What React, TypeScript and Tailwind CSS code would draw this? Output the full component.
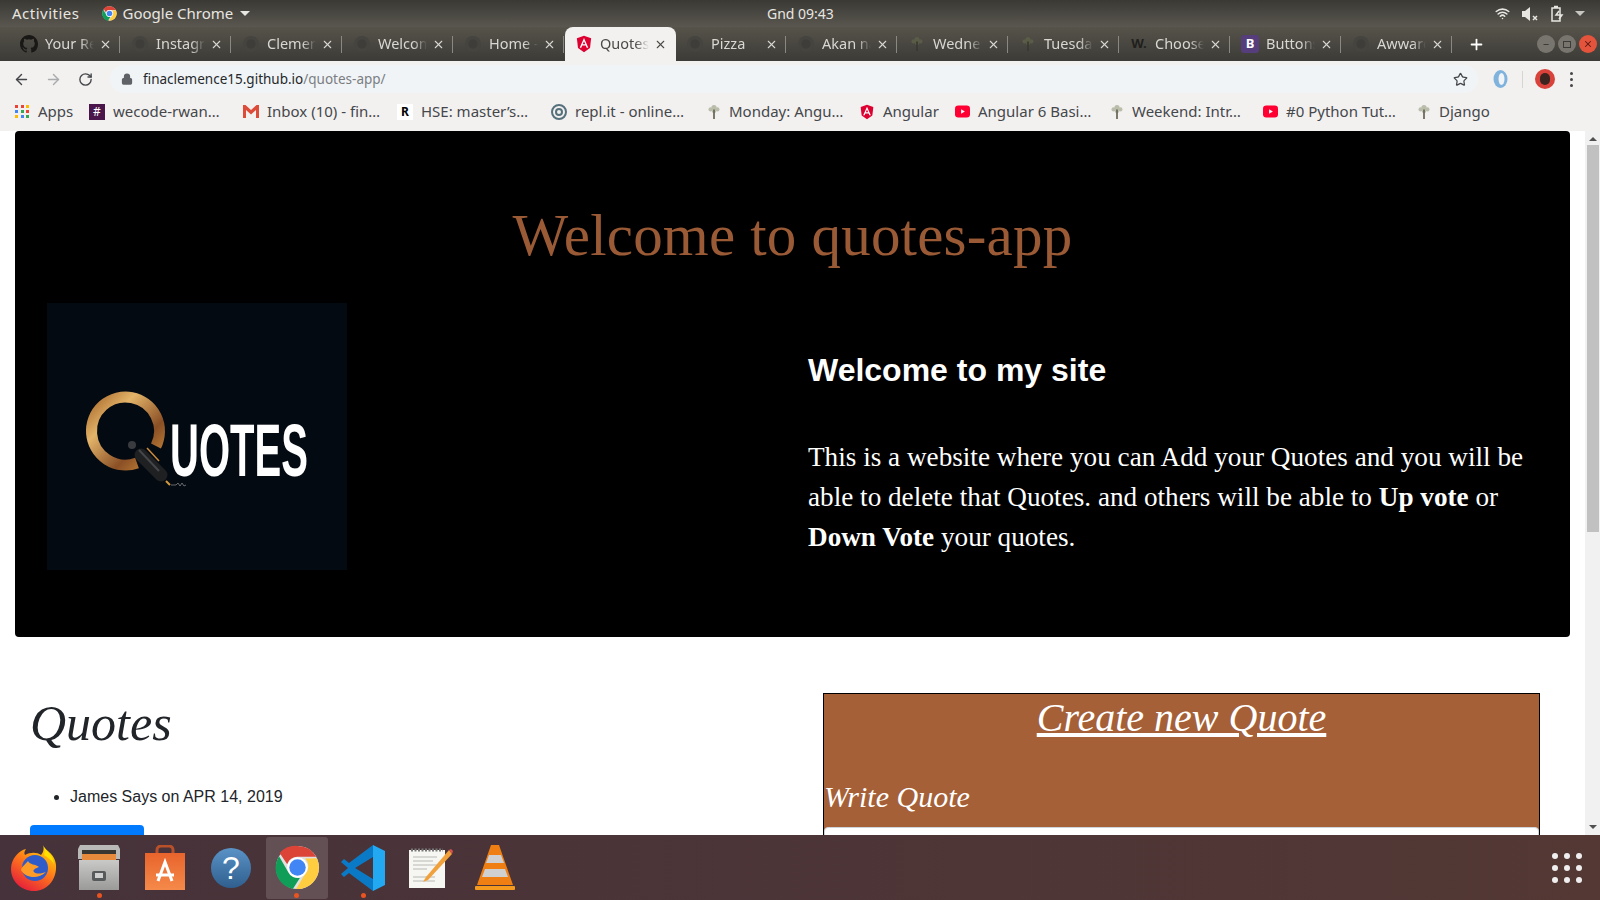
import { ArrowLeft, ArrowRight, Lock, Plus, RotateCw, Star, Wifi, X } from 'lucide-react'

function ChromeIcon({ size = 16 }: { size?: number }) {
  return (
    <svg width={size} height={size} viewBox="0 0 48 48">
      <circle cx="24" cy="24" r="23" fill="#e0e0e0" />
      <path d="M24 1a23 23 0 0 1 19.9 11.5H24a11.5 11.5 0 0 0-11 8L5 8.5A23 23 0 0 1 24 1z" fill="#db4437" />
      <path d="M4.3 12 14 28.8a11.5 11.5 0 0 0 12.5 6.3L19 47A23 23 0 0 1 4.3 12z" fill="#0f9d58" />
      <path d="M44.5 14a23 23 0 0 1-22 33L32 31a11.5 11.5 0 0 0 0-16.5z" fill="#ffcd40" />
      <circle cx="24" cy="24" r="11" fill="#fff" />
      <circle cx="24" cy="24" r="8.8" fill="#4285f4" />
    </svg>
  )
}

function AngularIcon({ size = 18 }: { size?: number }) {
  return (
    <svg width={size} height={size} viewBox="0 0 24 24">
      <path d="M12 1 2.5 4.4 4 17.2 12 23l8-5.8 1.5-12.8z" fill="#dd0031" />
      <path d="M12 4 6.3 17h2.1l1.2-2.9h4.8l1.2 2.9h2.1zm-1.700 8.300L12 8.300l1.700 4z" fill="#fff" />
    </svg>
  )
}

function DimGlobe() {
  return (
    <svg width="18" height="18" viewBox="0 0 18 18">
      <circle cx="9" cy="9" r="8" fill="#45443f" />
      <circle cx="9" cy="9" r="4.5" fill="#3e3d39" />
    </svg>
  )
}

function GithubIcon() {
  return (
    <svg width="18" height="18" viewBox="0 0 16 16" fill="#191816">
      <path d="M8 0C3.58 0 0 3.58 0 8c0 3.54 2.29 6.53 5.47 7.59.4.07.55-.17.55-.38v-1.34c-2.23.48-2.7-1.07-2.7-1.07-.36-.92-.89-1.17-.89-1.17-.73-.5.05-.49.05-.49.8.06 1.23.82 1.23.82.71 1.22 1.87.87 2.33.66.07-.52.28-.87.51-1.07-1.78-.2-3.64-.89-3.64-3.95 0-.87.31-1.59.82-2.15-.08-.2-.36-1.02.08-2.12 0 0 .67-.21 2.2.82a7.6 7.6 0 0 1 4 0c1.53-1.04 2.2-.82 2.2-.82.44 1.1.16 1.92.08 2.12.51.56.82 1.27.82 2.15 0 3.07-1.87 3.75-3.65 3.95.29.25.54.74.54 1.49v2.21c0 .21.15.46.55.38A8 8 0 0 0 16 8c0-4.42-3.58-8-8-8z" />
    </svg>
  )
}

function TreeIcon({ dim = false }: { dim?: boolean }) {
  const leaf = dim ? '#5a5c48' : '#b9bdaa'
  const trunk = dim ? '#3b3a30' : '#6b6658'
  return (
    <svg width="14" height="18" viewBox="0 0 16 18">
      <circle cx="8" cy="4" r="3" fill={leaf} />
      <circle cx="4" cy="6" r="2.3" fill={leaf} />
      <circle cx="12" cy="6" r="2.3" fill={leaf} />
      <circle cx="8" cy="8" r="2.3" fill={leaf} />
      <path d="M7 6h2v11H7z" fill={trunk} />
    </svg>
  )
}

function YoutubeIcon() {
  return (
    <svg width="15" height="15" viewBox="0 0 16 16">
      <rect x="0" y="1.5" width="16" height="13" rx="3.5" fill="#ff0033" />
      <path d="M6.5 5.5v5L10.5 8z" fill="#fff" />
    </svg>
  )
}

const tabs = [
  { title: 'Your Repositories', icon: <GithubIcon /> },
  { title: 'Instagram', icon: <DimGlobe /> },
  { title: 'Clement', icon: <DimGlobe /> },
  { title: 'Welcome', icon: <DimGlobe /> },
  { title: 'Home - Page', icon: <DimGlobe /> },
  { title: 'QuotesApp', icon: <AngularIcon />, active: true },
  { title: 'Pizza', icon: <DimGlobe /> },
  { title: 'Akan names', icon: <DimGlobe /> },
  { title: 'Wednesday', icon: <TreeIcon dim /> },
  { title: 'Tuesday', icon: <TreeIcon dim /> },
  { title: 'Choose', icon: <span className="text-[13px] font-bold text-[#201f1c]">W.</span> },
  {
    title: 'Buttons',
    icon: (
      <span className="flex h-[18px] w-[18px] items-center justify-center rounded-[3px] bg-[#563d7c] text-[13px] font-bold text-white">
        B
      </span>
    ),
  },
  { title: 'Awwards', icon: <DimGlobe /> },
]

const bookmarks = [
  {
    label: 'Apps',
    cls: 'w-[74px]',
    icon: (
      <span className="grid w-[15px] grid-cols-3 gap-[2px]">
        {['bg-[#ea4335]', 'bg-[#ea4335]', 'bg-[#fbbc05]', 'bg-[#4285f4]', 'bg-[#34a853]', 'bg-[#ea4335]', 'bg-[#fbbc05]', 'bg-[#4285f4]', 'bg-[#34a853]'].map((c, i) => (
          <span key={i} className={`h-[3px] w-[3px] ${c}`} />
        ))}
      </span>
    ),
  },
  {
    label: 'wecode-rwan…',
    cls: 'w-[154px]',
    icon: (
      <span className="grid h-4 w-4 place-items-center bg-[#4a154b] text-[12px] leading-none text-white">#</span>
    ),
  },
  {
    label: 'Inbox (10) - fin…',
    cls: 'w-[154px]',
    icon: (
      <svg width="16" height="13" viewBox="0 0 16 13">
        <path d="M0 0h2.5L8 5l5.5-5H16v13h-3V5L8 9.5 3 5v8H0z" fill="#dd4b39" />
      </svg>
    ),
  },
  {
    label: 'HSE: master’s…',
    cls: 'w-[154px]',
    icon: (
      <span className="flex h-4 w-4 items-center justify-center bg-white text-[12px] font-bold leading-none text-black">R</span>
    ),
  },
  {
    label: 'repl.it - online…',
    cls: 'w-[156px]',
    icon: (
      <svg width="16" height="16" viewBox="0 0 16 16" fill="none" stroke="#56707c" strokeWidth="2">
        <circle cx="8" cy="8" r="7" />
        <circle cx="8" cy="8" r="3" />
      </svg>
    ),
  },
  { label: 'Monday: Angu…', cls: 'w-[152px]', icon: <TreeIcon /> },
  { label: 'Angular', cls: 'w-[96px]', icon: <AngularIcon size={16} /> },
  { label: 'Angular 6 Basi…', cls: 'w-[155px]', icon: <YoutubeIcon /> },
  { label: 'Weekend: Intr…', cls: 'w-[153px]', icon: <TreeIcon /> },
  { label: '#0 Python Tut…', cls: 'w-[154px]', icon: <YoutubeIcon /> },
  { label: 'Django', cls: 'w-[80px]', icon: <TreeIcon /> },
]

function QuotesLogo() {
  return (
    <svg width="300" height="267" viewBox="0 0 300 267">
      <defs>
        <linearGradient id="ring" x1="0" y1="0" x2="1" y2="1">
          <stop offset="0" stopColor="#a8692c" />
          <stop offset="0.3" stopColor="#e3b469" />
          <stop offset="0.7" stopColor="#8a4f25" />
          <stop offset="1" stopColor="#c98a3c" />
        </linearGradient>
      </defs>
      <path d="M90 160A34 34 0 1 1 109 143" fill="none" stroke="url(#ring)" strokeWidth="11" />
      <circle cx="85" cy="142" r="4" fill="#3a3b3e" />
      <path d="M94 152 L114 172" stroke="#1f2022" strokeWidth="13" strokeLinecap="round" />
      <path d="M92 147 L112 168" stroke="#44464a" strokeWidth="2" />
      <path d="M100 145 L112 158" stroke="#c98a3c" strokeWidth="1.5" />
      <path d="M119 178 L123 182" stroke="#d39a3e" strokeWidth="2" />
      <path d="M124 182h5l2-2 2 3 2-3 2 3 2-1" stroke="#7f8286" strokeWidth="0.8" fill="none" />
      <text
        x="123"
        y="173"
        textLength="138"
        lengthAdjust="spacingAndGlyphs"
        fill="#fff"
        fontSize="74"
        fontWeight="700"
        fontFamily="Liberation Sans, sans-serif"
      >
        UOTES
      </text>
    </svg>
  )
}

function Dock() {
  return (
    <div className="flex h-[65px] shrink-0 items-center justify-between bg-gradient-to-r from-[#46323a] to-[#533834] pl-[2px] pr-[18px]">
      <div className="flex items-center">
        {/* firefox */}
        <div className="relative flex h-[62px] w-[62px] items-center justify-center pl-[2px]">
          <svg width="46" height="48" viewBox="0 0 46 48">
            <defs>
              <linearGradient id="fx" x1="0.8" y1="0" x2="0.2" y2="1">
                <stop offset="0" stopColor="#ffe000" />
                <stop offset="0.45" stopColor="#ff7a1a" />
                <stop offset="1" stopColor="#e3173e" />
              </linearGradient>
            </defs>
            <path d="M32 1c2 6 12 8 13 20 1 16-10 26-22 26C10 47 0 37 0 25 0 15 8 6 15 5c-2 3-2 4-1 6 5-3 12-3 16 0 3-3 3-7 2-10z" fill="url(#fx)" />
            <circle cx="24" cy="24" r="13" fill="#2f5cc8" />
            <path d="M10 26c4 8 17 10 25 2-3 1-9 3-12 0-2-2 2-4 5-5-4-3-9-2-11-6-2 3-6 5-7 9z" fill="#ff9c28" />
            <path d="M33 3c3 5 9 8 10 17-3-5-7-7-10-9 1-3 1-5 0-8z" fill="#ffe000" />
          </svg>
        </div>
        {/* files */}
        <div className="relative ml-[4px] flex h-[62px] w-[62px] items-center justify-center">
          <svg width="44" height="46" viewBox="0 0 44 46">
            <defs>
              <linearGradient id="steel" x1="0" y1="0" x2="0" y2="1">
                <stop offset="0" stopColor="#c9cac8" />
                <stop offset="1" stopColor="#9a9b99" />
              </linearGradient>
            </defs>
            <path d="M3 0h38l2 4v10H1V4z" fill="#b9bab8" />
            <rect x="5" y="5" width="34" height="10" fill="#3a3632" />
            <rect x="5" y="9" width="34" height="7" fill="#e78a3c" />
            <rect x="2" y="15" width="40" height="30" fill="url(#steel)" />
            <rect x="15" y="26" width="14" height="10" rx="2" fill="#575a5a" />
            <rect x="18" y="28" width="8" height="5" fill="#cfcfcf" />
          </svg>
          <span className="absolute bottom-[1px] left-[29px] h-[5px] w-[5px] rounded-full bg-[#e95420]" />
        </div>
        {/* software */}
        <div className="ml-[4px] flex h-[62px] w-[62px] items-center justify-center">
          <svg width="44" height="46" viewBox="0 0 44 46">
            <defs>
              <linearGradient id="bag" x1="0" y1="0" x2="0" y2="1">
                <stop offset="0" stopColor="#e8642c" />
                <stop offset="1" stopColor="#f58a4a" />
              </linearGradient>
            </defs>
            <path d="M14 10V5a4 4 0 0 1 4-4h8a4 4 0 0 1 4 4v5" fill="none" stroke="#b8502a" strokeWidth="3" />
            <path d="M2 8h40v37H2z" fill="url(#bag)" />
            <path d="M15 36 22 17l7 19" stroke="#fff" strokeWidth="3" fill="none" />
            <path d="M13 30h18" stroke="#fff" strokeWidth="3" />
          </svg>
        </div>
        {/* help */}
        <div className="ml-[4px] flex h-[62px] w-[62px] items-center justify-center">
          <span className="flex h-10 w-10 items-center justify-center rounded-full bg-gradient-to-b from-[#5b93c7] to-[#2f5f8e] font-['Liberation_Sans',sans-serif] text-[32px] leading-none text-white">
            ?
          </span>
        </div>
        {/* chrome, active */}
        <div className="relative ml-[4px] flex h-[62px] w-[62px] items-center justify-center rounded-[3px] bg-[#635055]">
          <ChromeIcon size={45} />
          <span className="absolute bottom-[1px] left-[28px] h-[5px] w-[5px] rounded-full bg-[#e95420]" />
        </div>
        {/* vscode */}
        <div className="relative ml-[4px] flex h-[62px] w-[62px] items-center justify-center">
          <svg width="44" height="46" viewBox="0 0 44 46">
            <path d="M32 0 44 6v34l-12 6V0z" fill="#23a9f2" />
            <path d="M32 0v12L14 23l18 11v12L8 28l-5 4-3-3 7-6-7-6 3-3 5 4z" fill="#0b7ac6" />
          </svg>
          <span className="absolute bottom-[1px] left-[29px] h-[5px] w-[5px] rounded-full bg-[#e95420]" />
        </div>
        {/* gedit */}
        <div className="ml-[4px] flex h-[62px] w-[62px] items-center justify-center pl-[4px]">
          <svg width="46" height="42" viewBox="0 0 46 42">
            <rect x="1" y="3" width="36" height="38" fill="#f6f6f2" />
            <path d="M3 3h32" stroke="#777" strokeWidth="3" strokeDasharray="2 1.5" />
            <path d="M5 10h24M5 14h20M5 18h24M5 22h14M5 30h22M5 34h22" stroke="#b8b8b4" strokeWidth="1" />
            <path d="M41 3 18 30l-3 5 5-2L44 7z" fill="#f0a13c" />
            <path d="M41 3l3 4 1-3-2-2z" fill="#d9534f" />
          </svg>
        </div>
        {/* vlc */}
        <div className="ml-[4px] flex h-[62px] w-[62px] items-center justify-center">
          <svg width="40" height="46" viewBox="0 0 40 46">
            <path d="M16 0h8l14 40H2z" fill="#f07f13" />
            <path d="M14 10h12l3 8H11zM10 24h20l3 8H7z" fill="#d0d0d0" />
            <rect x="0" y="41" width="40" height="4" rx="1" fill="#f49a1f" />
          </svg>
        </div>
      </div>
      <div className="grid grid-cols-3 gap-[6px]">
        {Array.from({ length: 9 }).map((_, i) => (
          <span key={i} className="h-[6px] w-[6px] rounded-full bg-[#f0eeee]" />
        ))}
      </div>
    </div>
  )
}

export default function App() {
  return (
    <div className="flex h-[900px] w-[1600px] flex-col overflow-hidden bg-white font-['Noto_Sans',sans-serif]">
      {/* ubuntu top bar */}
      <div className="relative flex h-[27px] shrink-0 items-center bg-gradient-to-b from-[#3a3934] to-[#5a5750] pl-[12px] pr-[15px] text-[15px] text-[#e8e6e1]">
        <span className="tracking-[0.5px]">Activities</span>
        <span className="ml-[22px] flex items-center gap-[6px]">
          <ChromeIcon size={15} />
          Google Chrome
          <span className="ml-[1px] h-0 w-0 border-x-[5px] border-t-[5px] border-x-transparent border-t-[#e8e6e1]" />
        </span>
        <span className="absolute left-[767px] text-[14px]">Gnd 09:43</span>
        <span className="ml-auto flex items-center gap-[11px]">
          <Wifi size={15} strokeWidth={2.5} />
          <svg width="18" height="16" viewBox="0 0 18 16" fill="#e8e6e1">
            <path d="M1 5h3l5-4v14l-5-4H1z" />
            <path d="m12 10 4 4m0-4-4 4" stroke="#e8e6e1" strokeWidth="1.5" />
          </svg>
          <svg width="14" height="18" viewBox="0 0 14 18" fill="none" stroke="#e8e6e1" strokeWidth="1.5">
            <path d="M4 1.5h4M2 3h8v13H2z" />
            <path d="m9 6-3 4h6l-3 4" />
          </svg>
          <span className="h-0 w-0 border-x-[5px] border-t-[5px] border-x-transparent border-t-[#c8c6c1]" />
        </span>
      </div>

      {/* tab strip */}
      <div className="relative flex h-[34px] shrink-0 items-end bg-gradient-to-b from-[#56534a] to-[#3c3b37] pl-[10px] text-[14.5px] text-[#d9d7d2]">
        {tabs.map(t => (
          <div
            key={t.title}
            className={
              t.active
                ? 'flex h-[34px] w-[111px] items-center rounded-t-[8px] bg-[#f2f1f0] pl-[10px] text-[#4b4a46]'
                : 'flex h-[34px] w-[111px] items-center pl-[10px]'
            }
          >
            <span className="flex w-[18px] shrink-0 items-center justify-center">{t.icon}</span>
            <span className="ml-[7px] w-[49px] shrink-0 overflow-hidden whitespace-nowrap [mask-image:linear-gradient(to_right,black_72%,transparent)]">
              {t.title}
            </span>
            <X size={13} strokeWidth={2} className="ml-[5px] shrink-0" />
            {!t.active && <span className="ml-[7px] h-[17px] w-px shrink-0 bg-[#8a8880]" />}
          </div>
        ))}
        <Plus size={17} strokeWidth={2.5} className="mb-[8px] ml-[15px] text-white" />
        <div className="ml-auto mb-[8px] flex items-center gap-[3px] pr-[3px]">
          <span className="grid h-[18px] w-[18px] place-items-center rounded-full bg-[#77756e] text-[12px] leading-none text-[#3c3b37]">–</span>
          <span className="grid h-[18px] w-[18px] place-items-center rounded-full bg-[#77756e]">
            <span className="h-[7px] w-[8px] border border-[#3c3b37]" />
          </span>
          <span className="grid h-[18px] w-[18px] place-items-center rounded-full bg-[#e4533c] text-[#5a1b10]">
            <X size={10} strokeWidth={2.5} />
          </span>
        </div>
      </div>

      {/* chrome toolbar */}
      <div className="flex h-[36px] shrink-0 items-center bg-[#f2f1f0] text-[#5f6368]">
        <ArrowLeft size={17} strokeWidth={2} className="ml-[13px] text-[#44464a]" />
        <ArrowRight size={17} strokeWidth={2} className="ml-[15px] text-[#a9abad]" />
        <RotateCw size={15} strokeWidth={2.2} className="ml-[16px] text-[#44464a]" />
        <div className="ml-[17px] flex h-[28px] w-[1368px] items-center rounded-full bg-[#f1f4f6] pl-[11px] pr-[10px] text-[13.5px]">
          <Lock size={12} strokeWidth={2.5} className="fill-[#5f6368]" />
          <span className="ml-[10px] text-[#25282c]">finaclemence15.github.io</span>
          <span className="text-[#7a7e83]">/quotes-app/</span>
          <Star size={15} strokeWidth={2} className="ml-auto text-[#44464a]" />
        </div>
        <svg width="17" height="20" viewBox="0 0 17 20" className="ml-[14px]">
          <ellipse cx="8.5" cy="10" rx="7" ry="9" fill="#7fb2dd" />
          <ellipse cx="9.5" cy="10" rx="3" ry="6" fill="#f1f4f6" />
        </svg>
        <span className="ml-[13px] h-[17px] w-px bg-[#d5d5d3]" />
        <span className="ml-[12px] flex h-[20px] w-[20px] items-center justify-center rounded-full bg-[#d9423a]">
          <span className="h-[12px] w-[10px] rounded-full bg-[#3a2420]" />
        </span>
        <span className="ml-[15px] flex flex-col gap-[3px]">
          <span className="h-[3px] w-[3px] rounded-full bg-[#44464a]" />
          <span className="h-[3px] w-[3px] rounded-full bg-[#44464a]" />
          <span className="h-[3px] w-[3px] rounded-full bg-[#44464a]" />
        </span>
      </div>

      {/* bookmarks */}
      <div className="flex h-[34px] shrink-0 items-center bg-[#f2f1f0] pb-[5px] pl-[15px] text-[15px] text-[#45474b]">
        {bookmarks.map(b => (
          <div key={b.label} className={`flex shrink-0 items-center gap-[8px] whitespace-nowrap ${b.cls}`}>
            {b.icon}
            <span>{b.label}</span>
          </div>
        ))}
      </div>

      {/* page + scrollbar */}
      <div className="flex min-h-0 flex-1">
        <main className="w-[1585px] shrink-0 overflow-hidden">
          <section className="mx-[15px] flex h-[506px] flex-col rounded-[4px] bg-black">
            <h1 className="flex h-[172px] shrink-0 items-center justify-center pt-[36px] font-['Liberation_Serif',serif] text-[59px] font-light tracking-[0.2px] text-[#9a5a35]">
              Welcome to quotes-app
            </h1>
            <div className="flex">
              <div className="w-[793px] shrink-0 pl-[32px]">
                <div className="h-[267px] w-[300px] bg-[#040a12]">
                  <QuotesLogo />
                </div>
              </div>
              <div className="w-[740px] pt-[48px] text-white">
                <h2 className="font-['Liberation_Sans',sans-serif] text-[32px] font-bold leading-[38px]">Welcome to my site</h2>
                <p className="mt-[48px] font-['Liberation_Serif',serif] text-[27.2px] leading-[40px]">
                  This is a website where you can Add your Quotes and you will be able to delete that Quotes. and others will be able to <b>Up vote</b> or <b>Down Vote</b> your quotes.
                </p>
              </div>
            </div>
          </section>

          <section className="flex">
            <div className="w-[823px] shrink-0 pl-[30px] text-[#212529]">
              <h2 className="mt-[56px] font-['Liberation_Serif',serif] text-[50px] italic leading-[60px]">Quotes</h2>
              <ul className="mt-[32px] list-disc pl-[40px] font-['Liberation_Sans',sans-serif] text-[16px] leading-[24px]">
                <li>James Says on APR 14, 2019</li>
              </ul>
              <button className="mt-[16px] h-[38px] w-[114px] rounded-[4px] bg-[#007bff]" />
            </div>
            <div className="mt-[56px] h-[300px] w-[717px] shrink-0 border border-black bg-[#a56038] font-['Liberation_Serif',serif] italic text-white">
              <h2 className="pt-[1px] text-center text-[40px] leading-[46px] underline">Create new Quote</h2>
              <label className="mt-[37px] block text-[30px] leading-[38px]">Write Quote</label>
              <div className="mt-[11px] h-[38px] w-full rounded-[4px] border border-[#ced4da] bg-white" />
            </div>
          </section>
        </main>
        <div className="flex w-[15px] shrink-0 flex-col items-center bg-[#f1f1f1]">
          <span className="mt-[6px] h-0 w-0 border-x-[4px] border-b-[4px] border-x-transparent border-b-[#505050]" />
          <span className="mt-[4px] h-[387px] w-[12px] bg-[#c1c1c1]" />
          <span className="mt-auto mb-[6px] h-0 w-0 border-x-[4px] border-t-[4px] border-x-transparent border-t-[#505050]" />
        </div>
      </div>

      <Dock />
    </div>
  )
}
